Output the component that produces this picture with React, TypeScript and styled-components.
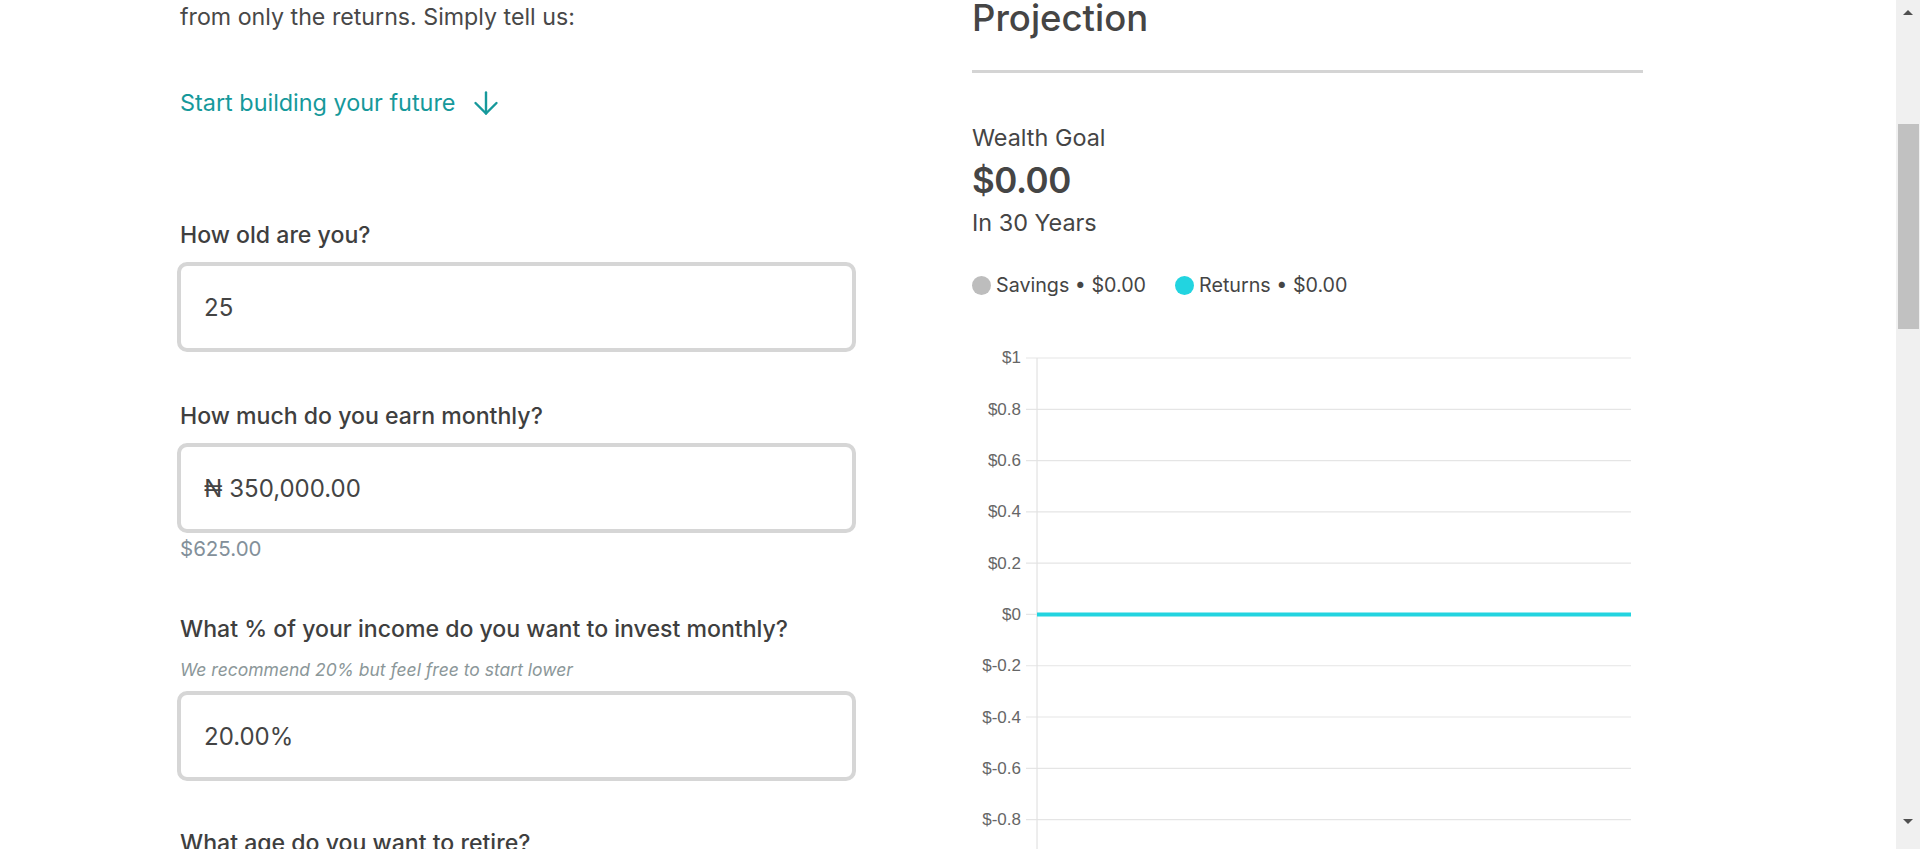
import React from "react";
import styled, { createGlobalStyle } from "styled-components";

const GlobalStyle = createGlobalStyle`
  html { overflow-y: scroll; }
  body {
    margin: 0;
    background: #ffffff;
    font-family: Inter, "Open Sans", Arial, sans-serif;
    color: #454545;
  }
  ::-webkit-scrollbar { width: 0; height: 0; }
`;

const Page = styled.div`
  display: flex;
  align-items: flex-start;
  gap: 115px;
  padding-left: 180px;
  padding-bottom: 200px;
`;

const FormColumn = styled.div`
  width: 677px;
  display: flex;
  flex-direction: column;
  padding-top: 2px;
`;

const Intro = styled.p`
  margin: 0;
  font-size: 23.2px;
  line-height: 30px;
  color: #484848;
`;

const StartLink = styled.a`
  margin-top: 56px;
  display: inline-flex;
  align-items: center;
  gap: 18px;
  align-self: flex-start;
  font-size: 23.4px;
  line-height: 30px;
  color: #16999b;
  text-decoration: none;
  cursor: pointer;
`;

const Field = styled.div<{ $gap: number }>`
  display: flex;
  flex-direction: column;
  margin-top: ${(p) => p.$gap}px;
`;

const Label = styled.label`
  font-size: 23.1px;
  line-height: 28px;
  font-weight: 500;
  color: #3f3f3f;
`;

const Hint = styled.span`
  margin-top: 17px;
  font-size: 17.5px;
  line-height: 20px;
  font-style: italic;
  color: #8b9799;
`;

const Input = styled.input<{ $top: number }>`
  margin: ${(p) => p.$top}px 0 0 -3px;
  box-sizing: border-box;
  width: 679px;
  height: 90px;
  border: 4px solid #d6d6d6;
  border-radius: 10px;
  padding: 0 23px;
  font-family: inherit;
  font-size: 24px;
  color: #444444;
  background: #ffffff;
  outline: none;
`;

const Converted = styled.span`
  margin-top: 4px;
  font-size: 20.5px;
  line-height: 24px;
  color: #83909a;
`;

const ProjectionColumn = styled.div`
  width: 671px;
  display: flex;
  flex-direction: column;
`;

const Heading = styled.h2`
  margin: 0;
  font-size: 36.5px;
  line-height: 36px;
  font-weight: 500;
  color: #454545;
`;

const Divider = styled.hr`
  margin: 34px 0 0;
  border: none;
  height: 3px;
  background: #d4d4d4;
`;

const GoalLabel = styled.div<{ $top: number }>`
  margin-top: ${(p) => p.$top}px;
  font-size: 23.4px;
  line-height: 28px;
  color: #454545;
`;

const GoalValue = styled.div`
  margin-top: 6px;
  font-size: 35px;
  line-height: 44px;
  font-weight: 600;
  color: #454545;
  letter-spacing: -0.5px;
`;

const Legend = styled.div`
  margin-top: 34px;
  display: flex;
  gap: 29px;
  font-size: 19.7px;
  line-height: 28px;
  color: #454545;
`;

const LegendItem = styled.div`
  display: flex;
  align-items: center;
  gap: 5px;
`;

const Dot = styled.span<{ $color: string }>`
  width: 19px;
  height: 19px;
  border-radius: 50%;
  background: ${(p) => p.$color};
`;

const ChartSvg = styled.svg`
  margin-top: 41px;
  display: block;
  font-family: "Liberation Sans", Arial, sans-serif;
`;

const Scrollbar = styled.div`
  position: fixed;
  top: 0;
  right: 0;
  width: 24px;
  height: 100vh;
  background: #f0f0f0;
  display: flex;
  flex-direction: column;
  align-items: center;
`;

const ScrollArrow = styled.div<{ $down?: boolean }>`
  width: 0;
  height: 0;
  margin-top: ${(p) => (p.$down ? "auto" : "10px")};
  margin-bottom: ${(p) => (p.$down ? "25px" : "0")};
  border-left: 5.5px solid transparent;
  border-right: 5.5px solid transparent;
  ${(p) =>
    p.$down ? "border-top: 5px solid #505050;" : "border-bottom: 5px solid #505050;"}
`;

const ScrollThumb = styled.div`
  margin-top: 109px;
  width: 21px;
  height: 205px;
  background: #c1c1c1;
`;

const ticks = ["$1", "$0.8", "$0.6", "$0.4", "$0.2", "$0", "$-0.2", "$-0.4", "$-0.6", "$-0.8", "$-1"];
const TOP = 18;
const STEP = 51.29;
const AXIS_X = 65;
const RIGHT = 659;

function Chart() {
  const bottom = TOP + STEP * (ticks.length - 1);
  const zeroY = TOP + STEP * 5;
  return (
    <ChartSvg width={671} height={bottom + 40} viewBox={`0 0 671 ${bottom + 40}`}>
      {ticks.map((t, i) => {
        const y = TOP + i * STEP;
        return (
          <g key={t}>
            <line x1={54} x2={RIGHT} y1={y} y2={y} stroke="#e5e5e5" strokeWidth={1.2} />
            <text x={49} y={y} textAnchor="end" dominantBaseline="central" fontSize={17} fill="#666666">
              {t}
            </text>
          </g>
        );
      })}
      <line x1={AXIS_X} x2={AXIS_X} y1={TOP} y2={bottom + 10} stroke="#e2e2e2" strokeWidth={1.2} />
      <line x1={AXIS_X} x2={RIGHT} y1={zeroY} y2={zeroY} stroke="#22d4e0" strokeWidth={4} />
    </ChartSvg>
  );
}

function DownArrow() {
  return (
    <svg width="26" height="26" viewBox="0 0 26 26" fill="none" stroke="currentColor" strokeWidth="2.4" strokeLinecap="round" strokeLinejoin="round">
      <path d="M13 2.5V23.5" />
      <path d="M2.5 13L13 23.5L23.5 13" />
    </svg>
  );
}

export default function App() {
  return (
    <>
      <GlobalStyle />
      <Page>
        <FormColumn>
          <Intro>from only the returns. Simply tell us:</Intro>
          <StartLink>
            Start building your future
            <DownArrow />
          </StartLink>

          <Field $gap={103}>
            <Label>How old are you?</Label>
            <Input $top={13} defaultValue="25" />
          </Field>

          <Field $gap={50}>
            <Label>How much do you earn monthly?</Label>
            <Input $top={13} defaultValue="₦ 350,000.00" />
            <Converted>$625.00</Converted>
          </Field>

          <Field $gap={54}>
            <Label>What % of your income do you want to invest monthly?</Label>
            <Hint>We recommend 20% but feel free to start lower</Hint>
            <Input $top={11} defaultValue="20.00%" />
          </Field>

          <Field $gap={48}>
            <Label>What age do you want to retire?</Label>
            <Input $top={13} defaultValue="55" />
          </Field>
        </FormColumn>

        <ProjectionColumn>
          <Heading>Projection</Heading>
          <Divider />
          <GoalLabel $top={51}>Wealth Goal</GoalLabel>
          <GoalValue>$0.00</GoalValue>
          <GoalLabel $top={7}>In 30 Years</GoalLabel>
          <Legend>
            <LegendItem>
              <Dot $color="#bdbdbd" />
              Savings • $0.00
            </LegendItem>
            <LegendItem>
              <Dot $color="#22d4e0" />
              Returns • $0.00
            </LegendItem>
          </Legend>
          <Chart />
        </ProjectionColumn>
      </Page>
      <Scrollbar aria-hidden="true">
        <ScrollArrow />
        <ScrollThumb />
        <ScrollArrow $down />
      </Scrollbar>
    </>
  );
}
